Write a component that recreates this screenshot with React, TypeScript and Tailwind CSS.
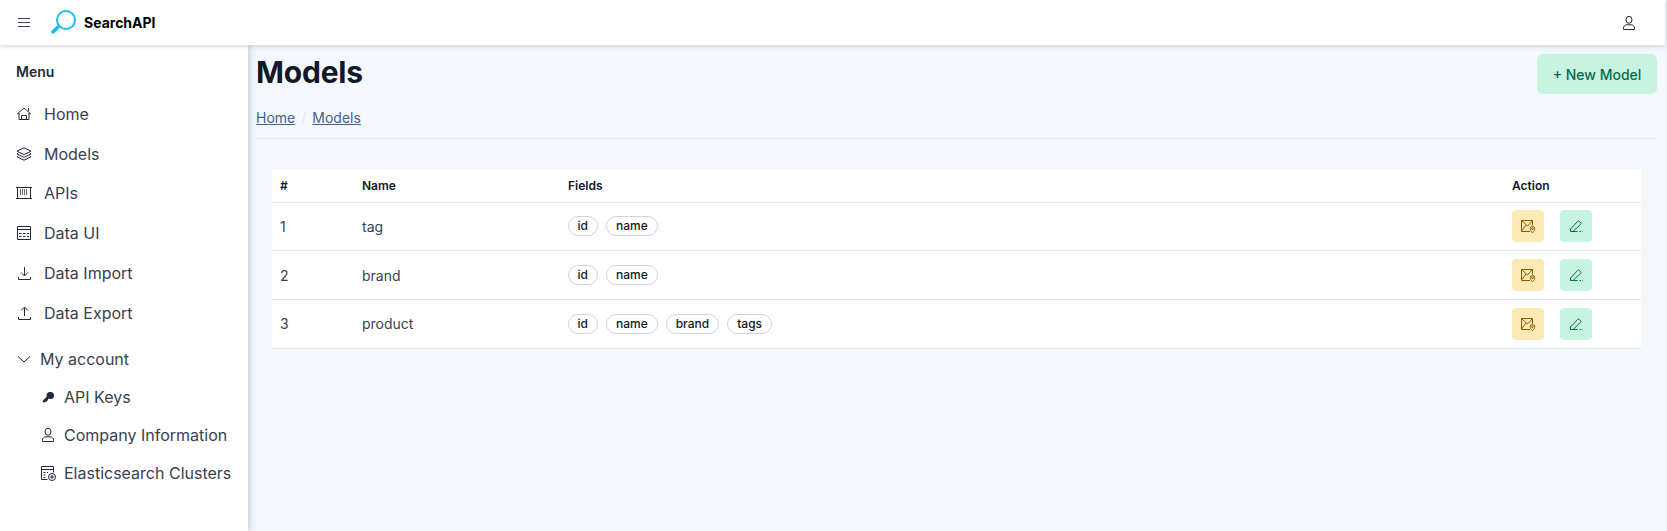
import type { ReactNode } from "react";

function Ico({ children, className = "" }: { children: ReactNode; className?: string }) {
  return (
    <svg viewBox="0 0 16 16" fill="none" stroke="currentColor" strokeWidth="1" className={`shrink-0 ${className}`}>
      {children}
    </svg>
  );
}

const HomeIcon = () => (
  <Ico className="w-4 h-4 text-[#1f2937]">
    <path d="M1 8.200 8 2l7 6.200M3 7v6.500h10V7M12.500 2v2.800M5.500 13.500v-4h5v4" />
  </Ico>
);
const LayersIcon = () => (
  <Ico className="w-4 h-4 text-[#1f2937]">
    <path d="M8 1.800 15 5.200 8 8.600 1 5.200ZM2.200 7.200 1 8l7 3.400L15 8l-1.200-.8M2.200 10 1 10.800l7 3.400 7-3.400-1.200-.8" />
  </Ico>
);
const ApiIcon = () => (
  <Ico className="w-4 h-4 text-[#1f2937]">
    <path d="M0 2.500H16M0 13.500H16M1.500 2.500V13.500M14.500 2.500V13.500" />
    <path strokeOpacity="0.7" d="M4.500 4V10M6.500 4V10M8.500 4V10M10.500 4V10" />
  </Ico>
);
const TableIcon = () => (
  <Ico className="w-4 h-4 text-[#1f2937]">
    <path d="M1.500 1.500h13v13h-13ZM1.500 4.500h13" />
    <path d="M3 8.500h2.500M7 8.500h2.500M11 8.500h2M3 11.500h2.500M7 11.500h2.500M11 11.500h2" />
  </Ico>
);
const DownIcon = () => (
  <Ico className="w-4 h-4 text-[#1f2937]">
    <path d="M8.500 2v8.500M5 7.500l3.500 3.500 3.500-3.500M2.500 12v2.500h12V12" />
  </Ico>
);
const UpIcon = () => (
  <Ico className="w-4 h-4 text-[#1f2937]">
    <path d="M8.500 11V2.500M5 5.500 8.500 2 12 5.500M2.500 12v2.500h12V12" />
  </Ico>
);
const Chevron = () => (
  <Ico className="w-4 h-4 text-[#1f2937]">
    <path d="M2 5.500 8 11l6-5.500" />
  </Ico>
);
const KeyIcon = () => (
  <svg viewBox="0 0 16 16" fill="currentColor" className="w-4 h-4 shrink-0 text-[#1f2937]">
    <path d="M10.500 3a3.500 3.500 0 1 1-1.700 6.500L8 10.300V11.500H6.800V12.700H5.600L4.500 13.500 2.800 13.200 2.800 11.800 6.700 7.700A3.500 3.500 0 0 1 10.500 3Z" />
  </svg>
);
const UserIcon = ({ className = "w-4 h-4" }: { className?: string }) => (
  <Ico className={className}>
    <ellipse cx="8" cy="4.800" rx="3" ry="3.500" />
    <path d="M2.500 14.500v-1.300c0-2 1.500-3.400 3.300-3.400h4.400c1.800 0 3.300 1.400 3.300 3.400v1.300Z" />
  </Ico>
);
const ClusterIcon = () => (
  <Ico className="w-4 h-4 text-[#1f2937]">
    <path d="M7.500 14.500h-6V1.500h12v6M1.500 4.500h12M3.500 7.500h2M3.500 10h2M3.500 12.500h2M7 7.500h1" />
    <circle cx="12" cy="12" r="3.500" />
    <path d="M12 10v4M10 12h4" />
  </Ico>
);
const MapPinIcon = () => (
  <Ico className="w-4 h-4">
    <path d="M10 13.500H1.500v-11h11v5M1.500 2.500 7.500 8l5-5.500M1.500 13l4.500-6" />
    <path d="M12.500 14.800c-1.600-1.800-2.300-3-2.300-4a2.300 2.300 0 0 1 4.600 0c0 1-.7 2.200-2.300 4Z" />
    <circle cx="12.500" cy="10.700" r=".8" />
  </Ico>
);
const PencilIcon = () => (
  <Ico className="w-4 h-4">
    <path d="M2.500 13.500V11L9.800 3.300a1 1 0 0 1 1.400 0l1.500 1.500a1 1 0 0 1 0 1.400L5 13.500ZM2.500 13.500h7M11.500 13.500h1.500M14 13.500h.5" />
  </Ico>
);

const mainMenu = [
  { label: "Home", icon: <HomeIcon /> },
  { label: "Models", icon: <LayersIcon /> },
  { label: "APIs", icon: <ApiIcon /> },
  { label: "Data UI", icon: <TableIcon /> },
  { label: "Data Import", icon: <DownIcon /> },
  { label: "Data Export", icon: <UpIcon /> },
];

const accountMenu = [
  { label: "API Keys", icon: <KeyIcon /> },
  { label: "Company Information", icon: <UserIcon className="w-4 h-4 text-[#1f2937]" /> },
  { label: "Elasticsearch Clusters", icon: <ClusterIcon /> },
];

const rows = [
  { id: 1, name: "tag", fields: ["id", "name"] },
  { id: 2, name: "brand", fields: ["id", "name"] },
  { id: 3, name: "product", fields: ["id", "name", "brand", "tags"] },
];

export default function App() {
  return (
    <div className="h-[531px] overflow-hidden bg-[#eff3f9] font-['Inter',sans-serif]">
      <div className="w-[1665px] h-full flex flex-col">
        <header className="relative z-20 h-[45px] shrink-0 bg-white shadow-[0_2px_4px_rgba(100,116,139,0.25)] flex items-center pl-[18px] pr-[28px]">
          <svg viewBox="0 0 12 9" fill="none" stroke="#374151" className="w-3 h-[9px]">
            <path d="M0 .5h12M0 4.500h12M0 8.500h12" />
          </svg>
          <svg viewBox="0 0 26 26" fill="none" stroke="#19bdf7" className="w-[26px] h-[26px] ml-[21px]">
            <circle cx="15" cy="10" r="9" strokeWidth="2" />
            <path d="M7.500 16.500 2 22" strokeWidth="3.500" strokeLinecap="round" />
          </svg>
          <span className="ml-[7px] text-[14px] font-bold text-black">SearchAPI</span>
          <div className="ml-auto text-[#1f2937]">
            <UserIcon className="w-4 h-4" />
          </div>
        </header>

        <div className="flex flex-1 min-h-0">
          <aside className="relative z-10 w-[248px] shrink-0 bg-white shadow-[2px_0_5px_rgba(100,116,139,0.3)] pl-4">
            <div className="pt-[17px] pb-[12px] text-[14px] leading-5 font-semibold text-[#1e293b]">Menu</div>
            <ul>
              {mainMenu.map((m) => (
                <li key={m.label} className="h-[39.800px] flex items-center gap-[12px] text-[16px] text-[#374151]">
                  {m.icon}
                  <span>{m.label}</span>
                </li>
              ))}
            </ul>
            <div className="mt-[7px] h-[38px] flex items-center gap-[8px] text-[16px] text-[#374151]">
              <Chevron />
              <span>My account</span>
            </div>
            <ul className="pl-[24px]">
              {accountMenu.map((m) => (
                <li key={m.label} className="h-[38px] flex items-center gap-[8px] text-[16px] text-[#374151]">
                  {m.icon}
                  <span className="whitespace-nowrap">{m.label}</span>
                </li>
              ))}
            </ul>
          </aside>

          <main className="flex-1 min-w-0 bg-[#f4f8fc] px-2">
            <div className="border-b border-[#e2e8f0] h-[94px] flex items-start justify-between">
              <div>
                <h1 className="pt-[9px] text-[30px] leading-9 font-bold tracking-[-0.2px] text-[#111827]">Models</h1>
                <nav className="mt-[18px] flex items-center text-[14px] leading-5 text-[#4a5f8a]">
                  <a className="underline">Home</a>
                  <span className="mx-[6px] text-[#e5e7eb]">/</span>
                  <a className="underline">Models</a>
                </nav>
              </div>
              <button className="mt-[9px] w-[120px] h-10 rounded-md bg-[#c7f4e1] text-[14px] font-medium text-[#046c4e]">
                + New Model
              </button>
            </div>

            <div className="mt-[31px] mx-[16px] bg-white">
              <table className="w-full table-fixed text-left border-collapse">
                <thead>
                  <tr className="h-[32px] border-b border-[#e2e8f0] text-[12px] font-semibold text-[#111827]">
                    <th className="w-[82px] px-2 font-semibold">#</th>
                    <th className="w-[206px] px-2 font-semibold">Name</th>
                    <th className="px-2 font-semibold">Fields</th>
                    <th className="w-[137px] px-2 font-semibold">Action</th>
                  </tr>
                </thead>
                <tbody>
                  {rows.map((r) => (
                    <tr key={r.id} className="h-[48.700px] border-b border-[#e2e8f0] text-[14px] text-[#374151]">
                      <td className="px-2">{r.id}</td>
                      <td className="px-2">{r.name}</td>
                      <td className="px-2">
                        <div className="flex gap-2 -ml-[0.500px]">
                          {r.fields.map((f) => (
                            <span
                              key={f}
                              className="h-5 px-[9px] flex items-center rounded-full border border-[#c9d5e6] text-[12px] font-medium text-[#111827]"
                            >
                              {f}
                            </span>
                          ))}
                        </div>
                      </td>
                      <td className="px-2">
                        <div className="flex gap-4">
                          <button className="w-8 h-8 rounded bg-[#fde9b6] text-[#8a5a00] flex items-center justify-center">
                            <MapPinIcon />
                          </button>
                          <button className="w-8 h-8 rounded bg-[#c7f4e1] text-[#046c4e] flex items-center justify-center">
                            <PencilIcon />
                          </button>
                        </div>
                      </td>
                    </tr>
                  ))}
                </tbody>
              </table>
            </div>
          </main>
        </div>
      </div>
    </div>
  );
}
